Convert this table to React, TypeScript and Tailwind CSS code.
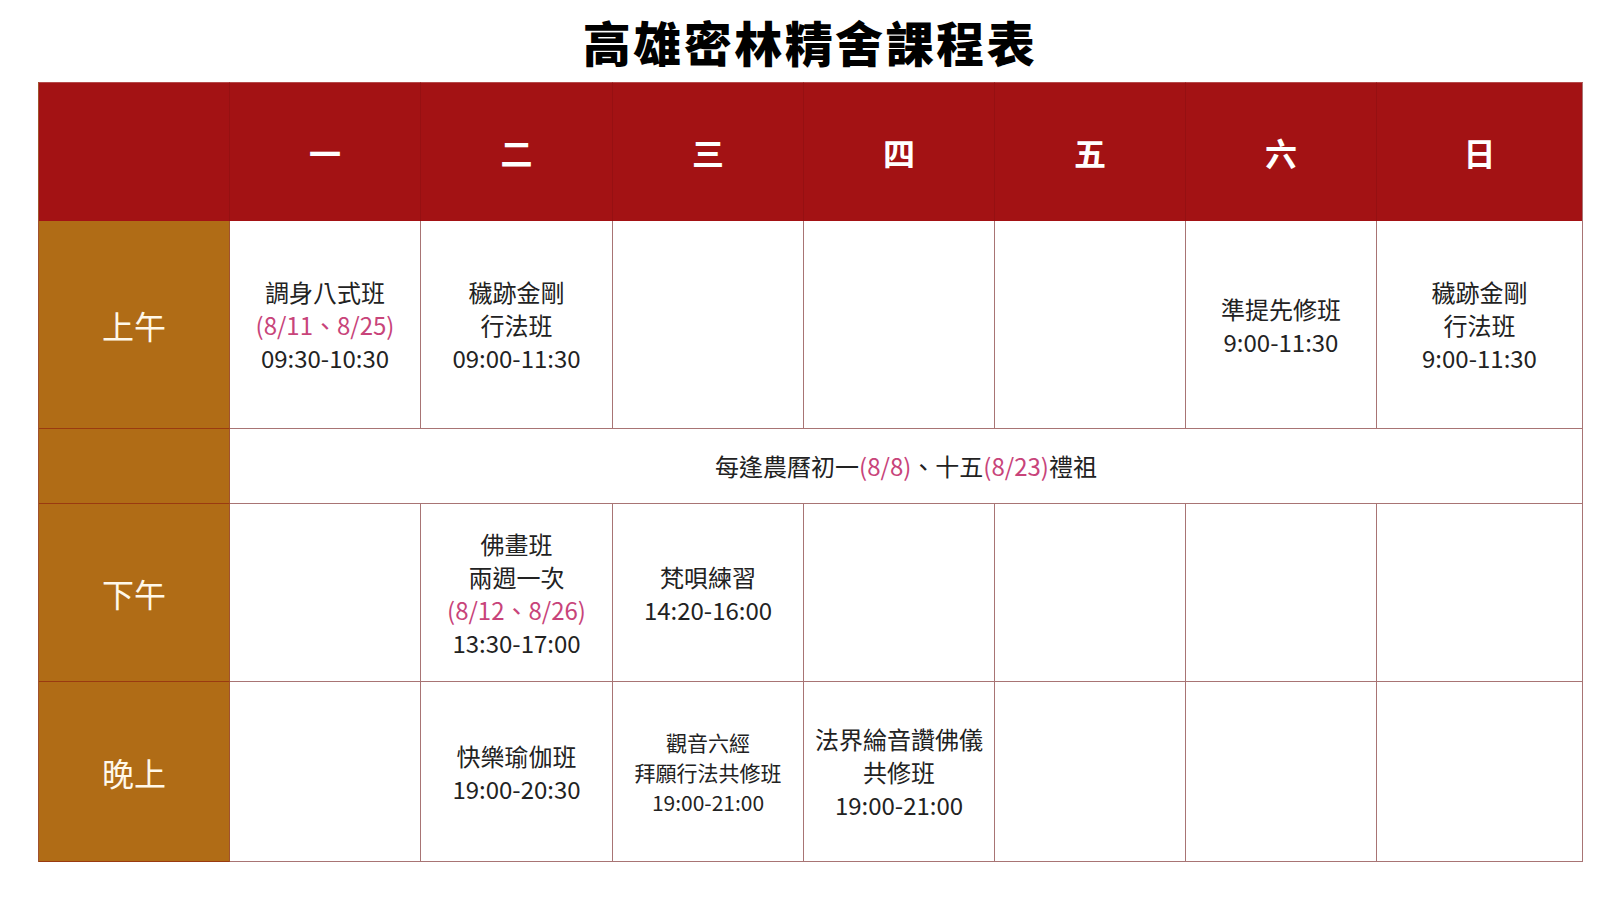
const FONT = '"Noto Sans CJK TC", "Noto Sans", sans-serif';

const DAYS = ['一', '二', '三', '四', '五', '六', '日'];

type Cell = { lines: { text: string; pink?: boolean }[]; small?: boolean } | null;

const MORNING: Cell[] = [
  { lines: [{ text: '調身八式班' }, { text: '(8/11、8/25)', pink: true }, { text: '09:30-10:30' }] },
  { lines: [{ text: '穢跡金剛' }, { text: '行法班' }, { text: '09:00-11:30' }] },
  null,
  null,
  null,
  { lines: [{ text: '準提先修班' }, { text: '9:00-11:30' }] },
  { lines: [{ text: '穢跡金剛' }, { text: '行法班' }, { text: '9:00-11:30' }] },
];

const AFTERNOON: Cell[] = [
  null,
  { lines: [{ text: '佛畫班' }, { text: '兩週一次' }, { text: '(8/12、8/26)', pink: true }, { text: '13:30-17:00' }] },
  { lines: [{ text: '梵唄練習' }, { text: '14:20-16:00' }] },
  null,
  null,
  null,
  null,
];

const EVENING: Cell[] = [
  null,
  { lines: [{ text: '快樂瑜伽班' }, { text: '19:00-20:30' }] },
  { lines: [{ text: '觀音六經' }, { text: '拜願行法共修班' }, { text: '19:00-21:00' }], small: true },
  { lines: [{ text: '法界綸音讚佛儀' }, { text: '共修班' }, { text: '19:00-21:00' }] },
  null,
  null,
  null,
];

function Label({ text }: { text?: string }) {
  return (
    <div className="flex items-center justify-center bg-[#b06c16] border-b border-b-[#9a3a10] border-r border-r-[#a0522d] text-[32px] text-[#fff8ea]">
      {text}
    </div>
  );
}

function BodyCell({ cell }: { cell: Cell }) {
  return (
    <div className="flex flex-col items-center justify-center text-center border-b border-b-[#a87474] border-r border-r-[#a87474] bg-white text-[#222]">
      {cell &&
        cell.lines.map((l, i) => (
          <div
            key={i}
            className={`${cell.small ? 'text-[21px] leading-[30px]' : 'text-[24px] leading-[33px]'} ${
              l.pink ? 'text-[#c8447a]' : ''
            }`}
          >
            {l.text}
          </div>
        ))}
    </div>
  );
}

function Row({ label, cells }: { label: string; cells: Cell[] }) {
  return (
    <>
      <Label text={label} />
      {cells.map((c, i) => (
        <BodyCell key={i} cell={c} />
      ))}
    </>
  );
}

export default function App() {
  return (
    <div className="w-[1620px] h-[904px] bg-white" style={{ fontFamily: FONT }}>
      <div className="h-[82px] flex items-center justify-center">
        <h1 className="text-[48px] font-black tracking-[2.5px] text-black leading-none">高雄密林精舍課程表</h1>
      </div>
      <div className="ml-[38px] grid grid-cols-[191px_191px_192px_191px_191px_191px_191px_206px] grid-rows-[139px_208px_75px_178px_180px] w-[1544px] border-l border-l-[#a0522d]">
        <div className="bg-[#a31214] border-r border-r-[#961012] border-t border-t-[#b54a4a]" />
        {DAYS.map((d, i) => (
          <div
            key={d}
            className={`flex items-center justify-center bg-[#a31214] border-t border-t-[#b54a4a] text-white text-[32px] font-bold ${
              i === DAYS.length - 1 ? 'border-r border-r-[#a87474]' : 'border-r border-r-[#961012]'
            }`}
          >
            {d}
          </div>
        ))}

        <Row label="上午" cells={MORNING} />

        <Label />
        <div className="col-span-7 flex items-center justify-center bg-white border-b border-b-[#a87474] border-r border-r-[#a87474] text-[24px] text-[#222]">
          <span>
            每逢農曆初一<span className="text-[#c8447a]">(8/8)</span>、十五
            <span className="text-[#c8447a]">(8/23)</span>禮祖
          </span>
        </div>

        <Row label="下午" cells={AFTERNOON} />
        <Row label="晚上" cells={EVENING} />
      </div>
    </div>
  );
}
